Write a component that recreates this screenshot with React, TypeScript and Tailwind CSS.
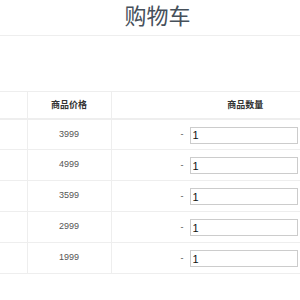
const prices = [3999, 4999, 3599, 2999, 1999]

export default function App() {
  return (
    <div
      className="w-[300px] h-[300px] overflow-hidden bg-white"
      style={{ fontFamily: '"Liberation Sans", "Noto Sans CJK SC", sans-serif' }}
    >
      <div className="w-[315px] h-[35px] text-center text-[22px] leading-[34px] text-[#46505a]">购物车</div>
      <div className="border-b border-[#eee]" />
      <div className="h-[55px]" />
      <table className="w-[379px] table-fixed border-collapse text-[9px]">
        <colgroup>
          <col className="w-[27px]" />
          <col className="w-[84px]" />
          <col className="w-[268px]" />
        </colgroup>
        <thead>
          <tr className="h-[27px] border-t border-b-2 border-[#eee]">
            <th></th>
            <th className="border-l border-[#eee] font-bold text-[#333] pt-[2px]">商品价格</th>
            <th className="border-l border-[#eee] font-bold text-[#333] pt-[2px]">商品数量</th>
          </tr>
        </thead>
        <tbody>
          {prices.map((price) => (
            <tr key={price} className="h-[31px] border-b border-[#eee]">
              <td></td>
              <td className="border-l border-[#eee] text-center text-[#555] align-top pt-[8px]">{price}</td>
              <td className="border-l border-[#eee] align-top pt-[7px] pl-[69px]">
                <div className="flex items-center gap-[6px] text-[#555]">
                  <span>-</span>
                  <input
                    readOnly
                    value="1"
                    className="w-[108px] h-[17px] border border-[#ccc] px-[2px] text-[11px] text-[#111] outline-none"
                  />
                </div>
              </td>
            </tr>
          ))}
        </tbody>
      </table>
    </div>
  )
}
